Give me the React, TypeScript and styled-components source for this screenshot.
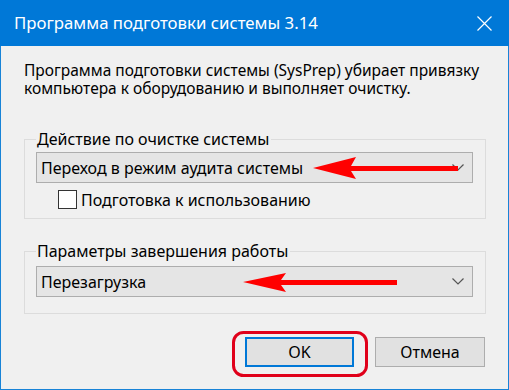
import React from "react";
import styled, { createGlobalStyle } from "styled-components";

const GlobalStyle = createGlobalStyle`
  html, body { margin: 0; padding: 0; background: #f0f0f0; }
  * { box-sizing: border-box; }
`;

const FONT = `"Noto Sans", "Open Sans", Arial, sans-serif`;

const Window = styled.div`
  position: relative;
  width: 509px;
  height: 390px;
  background: #f0f0f0;
  border: 1px solid #1883d7;
  border-top: none;
  display: flex;
  flex-direction: column;
  font-family: ${FONT};
  color: #000;
`;

const TitleBar = styled.div`
  height: 46px;
  margin: 0 -1px;
  background: #0078d7;
  color: #fff;
  display: flex;
  align-items: center;
  justify-content: space-between;
  padding-left: 14px;
  flex: none;
`;

const Title = styled.span`
  font-size: 16.8px;
  line-height: 20px;
  margin-top: -1px;
`;

const CloseButton = styled.div`
  width: 50px;
  height: 46px;
  display: flex;
  align-items: center;
  justify-content: center;
`;

const Content = styled.div`
  flex: 1;
  padding: 15px 22px 0 23px;
  display: flex;
  flex-direction: column;
`;

const Description = styled.div`
  display: flex;
  flex-direction: column;
`;

const DescLine = styled.span`
  display: block;
  height: 18px;
  font-size: 15.5px;
  line-height: 18px;
  white-space: nowrap;
`;

const Group = styled.fieldset<{ $mt: number; $pt: number; $pb: number }>`
  margin: ${(p) => p.$mt}px 0 0 0;
  padding: ${(p) => p.$pt}px 12px ${(p) => p.$pb}px 11px;
  border: 1px solid #dcdcdc;
  min-width: 0;
`;

const Legend = styled.legend`
  padding: 0 2px 0 1px;
  margin-left: 0;
  font-size: 16px;
  line-height: 18px;
`;

const Combo = styled.div`
  height: 31px;
  background: #e5e5e5;
  border: 1px solid #adadad;
  display: flex;
  align-items: center;
  justify-content: space-between;
  padding: 0 8px 0 4px;
  font-size: 16px;
`;

const CheckRow = styled.label`
  display: flex;
  align-items: center;
  gap: 4px;
  margin: 7px 0 0 22px;
  height: 19px;
  font-size: 16px;
`;

const CheckBox = styled.span`
  width: 19px;
  height: 19px;
  background: #fff;
  border: 1px solid #333;
  flex: none;
`;

const ButtonRow = styled.div`
  display: flex;
  justify-content: flex-end;
  gap: 21px;
  margin-top: 23px;
  padding-right: 1px;
`;

const Button = styled.div<{ $primary?: boolean; $w: number }>`
  width: ${(p) => p.$w}px;
  height: 30px;
  background: #e1e1e1;
  border: ${(p) => (p.$primary ? "2px solid #0078d7" : "1px solid #adadad")};
  display: flex;
  align-items: center;
  justify-content: center;
  font-size: 16px;
`;

const Annotations = styled.svg`
  position: absolute;
  left: -1px;
  top: 0;
  pointer-events: none;
`;

const Chevron = () => (
  <svg width="12" height="7" viewBox="0 0 12 7">
    <polyline points="0.5,0.5 6,6 11.5,0.5" fill="none" stroke="#555" strokeWidth="1.2" />
  </svg>
);

export default function App() {
  return (
    <>
      <GlobalStyle />
      <Window>
        <TitleBar>
          <Title>Программа подготовки системы 3.14</Title>
          <CloseButton>
            <svg width="15" height="15" viewBox="0 0 15 15">
              <path d="M0.5 0.5 L14.5 14.5 M14.5 0.5 L0.5 14.5" stroke="#fff" strokeWidth="1.2" />
            </svg>
          </CloseButton>
        </TitleBar>
        <Content>
          <Description>
            <DescLine>Программа подготовки системы (SysPrep) убирает привязку</DescLine>
            <DescLine>компьютера к оборудованию и выполняет очистку.</DescLine>
          </Description>
          <Group $mt={33} $pt={4} $pb={9}>
            <Legend>Действие по очистке системы</Legend>
            <Combo>
              <span>Переход в режим аудита системы</span>
              <Chevron />
            </Combo>
            <CheckRow>
              <CheckBox />
              <span>Подготовка к использованию</span>
            </CheckRow>
          </Group>
          <Group $mt={23} $pt={6} $pb={16}>
            <Legend>Параметры завершения работы</Legend>
            <Combo>
              <span>Перезагрузка</span>
              <Chevron />
            </Combo>
          </Group>
          <ButtonRow>
            <Button $primary $w={109}>OK</Button>
            <Button $w={110}>Отмена</Button>
          </ButtonRow>
        </Content>
        <Annotations width="509" height="390" viewBox="0 0 509 390">
          <polygon points="313,168 356,157 351,166 458,166 458,171 351,171 356,179" fill="#f00" />
          <polygon points="243,282 286,273 281,280 397,280 397,285 281,285 286,292" fill="#f00" />
          <rect x="233.5" y="332.5" width="133" height="43" rx="10" fill="none" stroke="#e0001a" strokeWidth="3" />
        </Annotations>
      </Window>
    </>
  );
}
